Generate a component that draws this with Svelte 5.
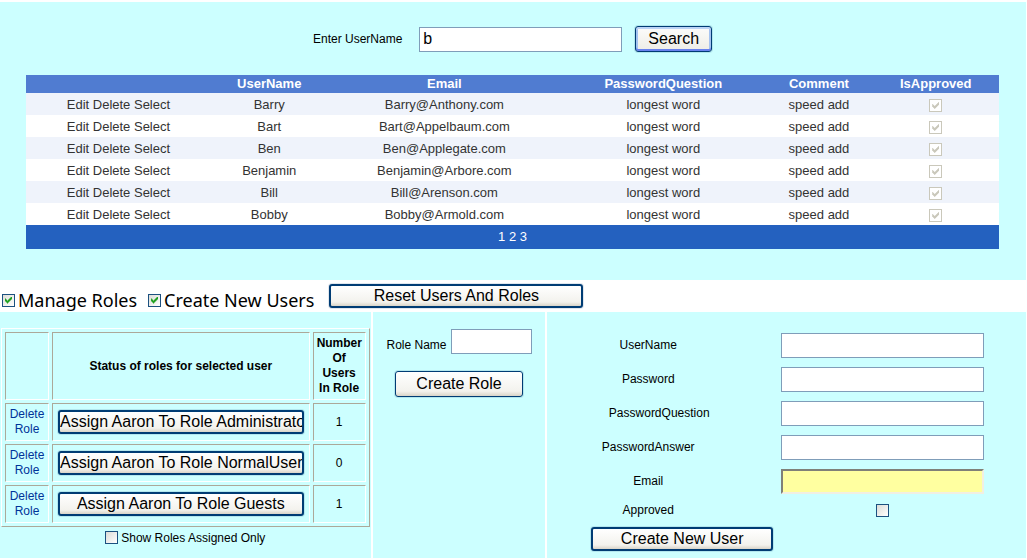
<script>
  const users = [
    ['Barry', 'Barry@Anthony.com'],
    ['Bart', 'Bart@Appelbaum.com'],
    ['Ben', 'Ben@Applegate.com'],
    ['Benjamin', 'Benjamin@Arbore.com'],
    ['Bill', 'Bill@Arenson.com'],
    ['Bobby', 'Bobby@Armold.com']
  ];
  const roles = [
    { name: 'Administrators', count: 1 },
    { name: 'NormalUsers', count: 0 },
    { name: 'Guests', count: 1 }
  ];
  const fields = [
    { id: 'new-name', label: 'UserName', type: 'text' },
    { id: 'new-password', label: 'Password', type: 'password' },
    { id: 'new-question', label: 'PasswordQuestion', type: 'text', long: true },
    { id: 'new-answer', label: 'PasswordAnswer', type: 'text' },
    { id: 'new-email', label: 'Email', type: 'email' }
  ];
  let query = $state('b');
  let manageRoles = $state(true);
  let createUsers = $state(true);
</script>

<main>
  <section class="users">
    <form class="search" onsubmit={(e) => e.preventDefault()}>
      <label for="query">Enter UserName</label>
      <input id="query" class="box" type="text" bind:value={query} />
      <button class="focus">Search</button>
    </form>

    <table class="grid">
      <colgroup>
        <col class="c1" /><col class="c2" /><col class="c3" /><col class="c4" /><col class="c5" /><col class="c6" />
      </colgroup>
      <thead>
        <tr>
          <td></td>
          <th>UserName</th>
          <th>Email</th>
          <th>PasswordQuestion</th>
          <th>Comment</th>
          <th>IsApproved</th>
        </tr>
      </thead>
      <tbody>
        {#each users as [name, email]}
          <tr>
            <td><a href="#edit">Edit</a> <a href="#delete">Delete</a> <a href="#select">Select</a></td>
            <td>{name}</td>
            <td>{email}</td>
            <td>longest word</td>
            <td>speed add</td>
            <td><input type="checkbox" checked disabled aria-label="IsApproved" /></td>
          </tr>
        {/each}
      </tbody>
      <tfoot>
        <tr>
          <td colspan="6"><span>1</span> <a href="#page2">2</a> <a href="#page3">3</a></td>
        </tr>
      </tfoot>
    </table>
  </section>

  <div class="options">
    <label><input type="checkbox" bind:checked={manageRoles} />Manage Roles</label>
    <label><input type="checkbox" bind:checked={createUsers} />Create New Users</label>
    <button class="reset">Reset Users And Roles</button>
  </div>

  <div class="panels">
    <section class="roles">
      <table class="status">
        <thead>
          <tr>
            <td class="del"></td>
            <th>Status of roles for selected user</th>
            <th class="num">Number Of Users In Role</th>
          </tr>
        </thead>
        <tbody>
          {#each roles as role}
            <tr>
              <td><a href="#delete-role">Delete Role</a></td>
              <td><button class="assign"><span>Assign Aaron To Role {role.name}</span></button></td>
              <td>{role.count}</td>
            </tr>
          {/each}
        </tbody>
      </table>
      <label class="only"><input type="checkbox" />Show Roles Assigned Only</label>
    </section>

    <section class="newrole">
      <div class="line">
        <label for="role">Role Name</label>
        <input id="role" class="box" type="text" />
      </div>
      <button class="create">Create Role</button>
    </section>

    <section class="newuser">
      {#each fields as f}
        <label class:long={f.long} for={f.id}>{f.label}</label>
        <input id={f.id} class="box" type={f.type} />
      {/each}
      <label for="approved">Approved</label>
      <input id="approved" type="checkbox" />
      <button>Create New User</button>
    </section>
  </div>
</main>

<style>
  :global(body) {
    margin: 0;
    background: #fff;
  }
  main {
    padding: 2px 1px 2px 0;
    font: 12px/15px 'Liberation Sans', Arial, sans-serif;
    color: #000;
  }
  main * {
    box-sizing: border-box;
  }
  a {
    color: inherit;
    text-decoration: none;
  }
  button {
    height: 26px;
    padding: 0 8px;
    border: 1px solid #003c74;
    border-radius: 3px;
    background: linear-gradient(#fff, #f3f2ed 80%, #d9d4c8);
    box-shadow: 0 0 0 1px rgba(0, 60, 116, 0.12);
    font: 16px/22px 'Liberation Sans', Arial, sans-serif;
    color: #000;
    white-space: nowrap;
    overflow: hidden;
  }
  button.focus {
    background: linear-gradient(#fcfcfb, #eeede6);
    box-shadow: 0 0 0 1px rgba(0, 60, 116, 0.12), inset 0 2px 0 #bcd4f6, inset 0 -2px 0 #6982ee, inset 2px 0 0 #a5c3f0, inset -2px 0 0 #a5c3f0;
  }
  .box {
    width: 203px;
    height: 25px;
    padding: 1px 3px;
    border: 1px solid #7f9db9;
    border-radius: 0;
    background: #fff;
    font: 16px/20px 'Liberation Sans', Arial, sans-serif;
    outline: 0;
  }
  .box[type='email'] {
    border: 2px solid;
    border-color: #808078 #f1efe2 #f1efe2 #808078;
    background: #ffffa0;
  }
  input[type='checkbox'] {
    appearance: none;
    flex: none;
    display: inline-block;
    width: 13px;
    height: 13px;
    margin: 0;
    padding: 2px;
    border: 1px solid #1c5180;
    background: linear-gradient(135deg, #dcdcd7, #fff);
    vertical-align: middle;
  }
  input[type='checkbox']:checked::before {
    content: '';
    display: block;
    width: 7px;
    height: 7px;
    background: #21a121;
    clip-path: polygon(0 2px, 1px 2px, 1px 3px, 2px 3px, 2px 4px, 3px 4px, 3px 3px, 4px 3px, 4px 2px, 5px 2px, 5px 1px, 6px 1px, 6px 0, 7px 0, 7px 3px, 6px 3px, 6px 4px, 5px 4px, 5px 5px, 4px 5px, 4px 6px, 3px 6px, 3px 7px, 2px 7px, 2px 6px, 1px 6px, 1px 5px, 0 5px);
  }
  input[type='checkbox']:disabled {
    border-color: #cac8bb;
    background: #fff;
  }
  input[type='checkbox']:disabled::before {
    background: #cac8bb;
  }

  .users {
    padding: 24px 27px 31px 26px;
    background: #cff;
  }
  .search {
    display: flex;
    align-items: center;
    justify-content: center;
    height: 26px;
    margin-bottom: 23px;
  }
  .search .box {
    margin: 0 13px 0 17px;
  }
  .search button {
    padding: 0 12px;
  }
  .grid {
    width: 100%;
    table-layout: fixed;
    border-collapse: collapse;
    font-size: 13px;
    line-height: 16px;
    color: #333;
    text-align: center;
  }
  .c1 { width: 19%; }
  .c2 { width: 12%; }
  .c3 { width: 24%; }
  .c4 { width: 21%; }
  .c5 { width: 11%; }
  .c6 { width: 13%; }
  .grid th,
  .grid td {
    padding: 0;
  }
  .grid thead tr {
    height: 18px;
    background: #507cd1;
    color: #fff;
  }
  .grid tbody tr {
    height: 22px;
    background: #fff;
  }
  .grid tbody td {
    padding-top: 2px;
  }
  .grid tbody tr:nth-child(odd) {
    background: #eff3fb;
  }
  .grid tfoot tr {
    height: 24px;
    background: #2461bf;
    color: #fff;
  }

  .options {
    display: flex;
    align-items: center;
    height: 32px;
    padding-left: 2px;
  }
  .options label {
    display: flex;
    align-items: center;
    gap: 3px;
    margin: 8px 11px 0 0;
    font: 18px/24px 'Noto Sans', 'Open Sans', sans-serif;
    white-space: nowrap;
  }
  .options .reset {
    width: 254px;
    height: 24px;
    margin-left: 4px;
    line-height: 20px;
    border-width: 2px;
  }

  .panels {
    display: grid;
    grid-template-columns: 371fr 173fr 479fr;
    gap: 2px;
  }
  .panels section {
    background: #cff;
  }
  .roles {
    display: flex;
    flex-direction: column;
    align-items: center;
    padding: 16px 1px 12px;
  }
  .status {
    width: 100%;
    table-layout: fixed;
    border: 1px solid;
    border-color: #fff #aca899 #aca899 #fff;
    border-collapse: separate;
    border-spacing: 3px;
    text-align: center;
  }
  .status th,
  .status td {
    padding: 3px;
    border: 1px solid;
    border-color: #aca899 #fff #fff #aca899;
  }
  .status .del {
    width: 44px;
  }
  .status .num {
    width: 53px;
  }
  .status a {
    color: #039;
  }
  .assign {
    display: flex;
    justify-content: safe center;
    width: 100%;
    padding: 0;
    height: 24px;
    line-height: 20px;
    border-width: 2px;
  }
  .status td:has(.assign) {
    padding: 3px 5px;
  }
  .only {
    display: flex;
    gap: 3px;
    margin-top: 4px;
  }
  .newrole {
    display: flex;
    flex-direction: column;
    align-items: center;
    gap: 17px;
    padding-top: 17px;
  }
  .line {
    display: flex;
    align-items: center;
    gap: 4px;
  }
  .line label {
    margin-top: 8px;
    white-space: nowrap;
  }
  .line .box {
    width: 81px;
  }
  .create {
    width: 128px;
  }
  .newuser {
    display: grid;
    grid-template-columns: 182px 203px;
    gap: 9px 8px;
    justify-content: center;
    justify-items: center;
    align-items: center;
    align-content: start;
    padding: 21px 0 7px 2px;
  }
  .newuser label {
    padding-right: 68px;
  }
  .newuser label.long {
    padding-right: 46px;
  }
  .newuser button {
    width: 182px;
    height: 24px;
    line-height: 20px;
    border-width: 2px;
  }
</style>
